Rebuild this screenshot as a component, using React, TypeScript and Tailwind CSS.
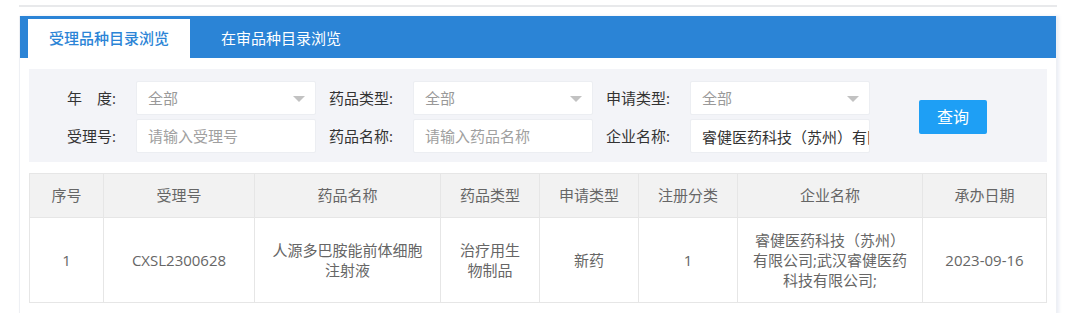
import React from "react";

const font = { fontFamily: '"Open Sans", "Noto Sans CJK SC", sans-serif' };

function Select({ value }: { value: string }) {
  return (
    <div className="relative flex h-[34px] w-[180px] items-center rounded-[2px] border border-[#eceef2] bg-white pl-[11px] text-[15px] text-[#999]">
      <span>{value}</span>
      <span className="absolute right-[10px] top-[14px] h-0 w-0 border-x-[6px] border-t-[6px] border-x-transparent border-t-[#c2c2c2]" />
    </div>
  );
}

function Input({ placeholder, value }: { placeholder?: string; value?: string }) {
  return (
    <input
      readOnly
      value={value ?? ""}
      placeholder={placeholder}
      style={font}
      className="h-[34px] w-[180px] rounded-[2px] border border-[#eceef2] bg-white pl-[11px] pr-0 text-[15px] text-[#333] outline-none placeholder:text-[#a0a0a0]"
    />
  );
}

function Label({ children }: { children: React.ReactNode }) {
  return <div className="w-[97px] shrink-0 pr-[20px] text-right text-[15px] text-[#333]">{children}</div>;
}

const cols = [
  { w: 74, h: "序号" },
  { w: 151, h: "受理号" },
  { w: 186, h: "药品名称" },
  { w: 99, h: "药品类型" },
  { w: 99, h: "申请类型" },
  { w: 99, h: "注册分类" },
  { w: 185, h: "企业名称" },
  { w: 124, h: "承办日期" },
];

const row = [
  "1",
  "CXSL2300628",
  "人源多巴胺能前体细胞注射液",
  "治疗用生物制品",
  "新药",
  "1",
  "睿健医药科技（苏州）有限公司;武汉睿健医药科技有限公司;",
  "2023-09-16",
];

export default function App() {
  return (
    <div className="h-[313px] w-[1080px] overflow-hidden bg-white" style={font}>
      <div className="flex h-full">
        <div className="w-[19px] shrink-0" />
        <div className="w-[1038px] shrink-0">
          <div className="mt-[5px] h-[2px] bg-[#e8e9eb]" />
          <div className="mt-[9px] border-x border-[#eef0f4] shadow-[2px_0_3px_rgba(230,234,242,0.8)]">
            <div className="flex h-[42px] items-end gap-[10px] bg-[#2b84d6] pl-[8px]">
              <div className="flex h-[39px] items-center bg-white px-[21px] text-[15px] font-medium text-[#2b84d6]">
                受理品种目录浏览
              </div>
              <div className="flex h-[39px] items-center px-[21px] text-[15px] text-white">在审品种目录浏览</div>
            </div>
            <div className="px-[9px] pt-[11px] pb-[12px]">
              <div className="flex items-center bg-[#f3f4f8] pl-[10px] pt-[12px] pb-[9px]">
                <div className="flex flex-col gap-[4px]">
                  <div className="flex items-center">
                    <Label>年　度:</Label>
                    <Select value="全部" />
                    <Label>药品类型:</Label>
                    <Select value="全部" />
                    <Label>申请类型:</Label>
                    <Select value="全部" />
                  </div>
                  <div className="flex items-center">
                    <Label>受理号:</Label>
                    <Input placeholder="请输入受理号" />
                    <Label>药品名称:</Label>
                    <Input placeholder="请输入药品名称" />
                    <Label>企业名称:</Label>
                    <Input value="睿健医药科技（苏州）有限公司;武汉睿健医药科技有限公司;" />
                  </div>
                </div>
                <button className="ml-[49px] flex h-[34px] w-[68px] items-center justify-center rounded-[2px] bg-[#1e9ff5] text-[16px] text-white">
                  查询
                </button>
              </div>
              <table className="mt-[11px] w-[1017px] table-fixed border-collapse text-[15px]">
                <colgroup>
                  {cols.map((c, i) => (
                    <col key={i} style={{ width: c.w }} />
                  ))}
                </colgroup>
                <thead>
                  <tr className="h-[44px] bg-[#f2f2f2]">
                    {cols.map((c, i) => (
                      <th key={i} className="border border-[#e6e6e6] px-[15px] text-center font-normal text-[#666]">
                        {c.h}
                      </th>
                    ))}
                  </tr>
                </thead>
                <tbody>
                  <tr className="h-[85px]">
                    {row.map((t, i) => (
                      <td key={i} className="border border-[#e6e6e6] px-[15px] text-center leading-[20px] text-[#666]">
                        {t}
                      </td>
                    ))}
                  </tr>
                </tbody>
              </table>
            </div>
          </div>
        </div>
      </div>
    </div>
  );
}
